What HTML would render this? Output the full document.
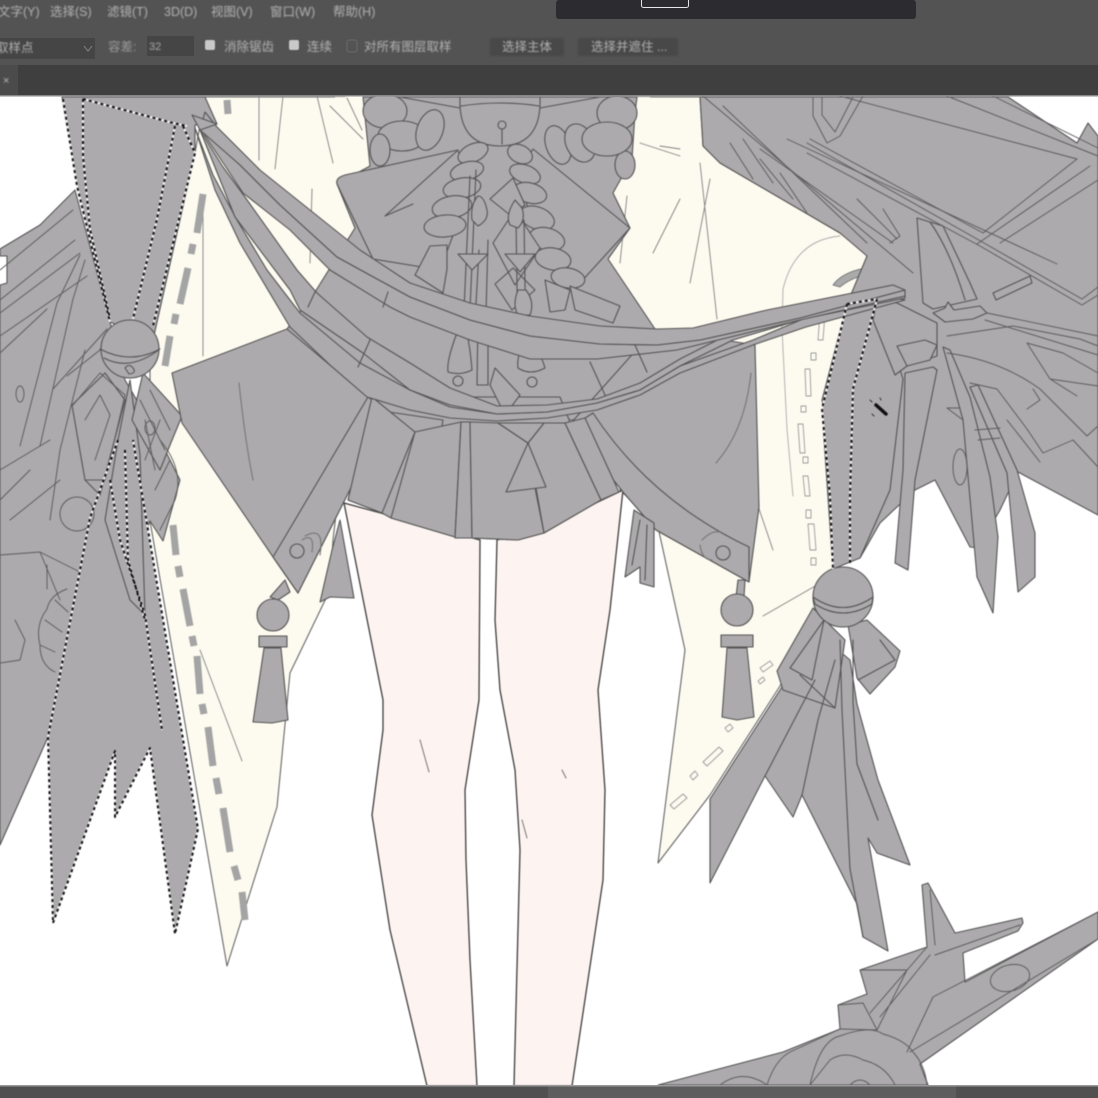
<!DOCTYPE html>
<html><head><meta charset="utf-8"><style>
html,body{margin:0;padding:0;background:#fff}
#w{position:relative;width:1098px;height:1098px;overflow:hidden;font-family:"Liberation Sans","Noto Sans CJK SC",sans-serif}
svg{position:absolute;left:0;top:0}
#art{filter:blur(.5px)}
.t{position:absolute;color:#b4b4b4;font-size:12.5px;white-space:nowrap;filter:blur(.7px);line-height:14px}
.ck{position:absolute;width:10px;height:10px;background:#c9c9c9;border-radius:2px;top:40px;filter:blur(.5px)}
.b{position:absolute;top:38px;height:18px;background:#484848;border-radius:2px;filter:blur(1px)}
</style></head><body><div id="w">
<svg width="1098" height="1098" viewBox="0 0 1098 1098" xmlns="http://www.w3.org/2000/svg">
<rect width="1098" height="1098" fill="#fff"/>
<g id="art" stroke-linejoin="round" stroke-linecap="round">
<!-- cream -->
<g fill="#fdfbf0" stroke="#666" stroke-width="1.100">
<path d="M205 97L345 97L350 240L340 480L333 540L330 590L290 673L277 807L227 966L150 521L150 340L195 153Z"/>
<path d="M610 97L700 97L703 146L720 163L840 233L893 273L847 304L822 409L833 569L780 686L710 795L658 863L685 650L658 527L620 490L600 300Z"/>
<path d="M335 97H650V340H335Z" stroke="none"/>
</g>
<g fill="none" stroke="#808080" stroke-width=".9">
<path d="M283 96L275 169M317 96L333 163M259 96L259 160M312 189L310 263M203 196L203 356M330 106L363 139M347 98L362 130M200 650L242 761M640 143L680 156M660 146L680 149M680 199L653 253M627 196L620 263M690 283L710 179M700 163L717 319M757 503L773 550M763 616L817 585"/>
<path d="M840 236Q795 240 783 289L782 329L787 429L793 496" stroke="#aaa"/>
</g>
<path d="M833 285Q845 268 883 266L885 272Q855 274 840 287Z" fill="#aaa" stroke="#666" stroke-width=".8"/>
<!-- dashes -->
<g fill="none" stroke="#a4a4a4" stroke-width="7" stroke-linecap="butt">
<path d="M227 100L228 114M203 194L197 233M193 244L191 254M188 268L180 304M176 314L174 324M170 336L165 366M173 525L176 555M178 566L180 577M183 589L190 626M192 636L194 646M197 656L200 694M202 704L204 714M208 727L213 766M216 778L219 794M223 808L230 852M234 866L238 880M242 892L245 920"/>
</g>
<g fill="#fdfbf0" stroke="#999" stroke-width=".9">
<path d="M820 313h5l-2 27h-5zM811 353h5v7h-5zM805 369h5l1 27h-5zM801 406h5v6h-5zM798 424h5l2 29h-5zM803 457h5v6h-5zM803 476h5l2 20h-5zM806 510h5v8h-5zM808 524h6l2 26h-6zM811 558h5v7h-5z"/>
<path d="M760 668l10-7 3 4-10 7zM758 681l5-4 2 3-5 4zM725 728l5-4 3 4-5 4zM703 762l16-15 4 4-16 15zM690 776l5-5 3 4-5 5zM670 805l13-11 4 4-13 11z"/>
</g>
<!-- legs -->
<g fill="#fdf3f0" stroke="#3d3d3d" stroke-width="1.300">
<path d="M344 503L383 700L383 730L372 815L390 930L427 1086L477 1086L470 960L466 860L465 790L479 700L480 540Z"/>
<path d="M497 540L495 620L500 690L515 770L520 850L514 1086L572 1086L603 880L605 790L598 690L610 610L623 490L560 520Z"/>
</g>
<path d="M420 740L429 772M562 770L566 778M522 820L527 838" stroke="#777" fill="none"/>
<g fill="#acaaac" stroke="#555" stroke-width="1.100">
<!-- left gear -->
<path d="M0 249L40 225L75 190L110 322L125 380L160 440L180 480L163 541L150 521L135 560L90 560L48 737L0 845L0 285L7 283L7 256L0 256Z"/>
<!-- upper left ribbon -->
<path d="M62 97L205 97L217 124L195 125L195 153L153 340L110 322L77 186Z"/>
<!-- lower left ribbon -->
<path d="M118 440L90 518L48 737L53 923L115 751L115 817L150 748L175 934L198 829L133 440Z"/>
<path d="M130 380L140 455L145 615L130 600L105 520L118 440Z"/>
<!-- bows -->
<path d="M105 373L72 405L85 480L100 495L125 400Z"/>
<path d="M143 373L182 416L170 445L160 470L132 420Z"/>
<circle cx="130" cy="349" r="29"/>
<path d="M100 349Q130 365 160 349Q130 372 104 358" fill="none"/>
<path d="M125 368q4-5 8 0t-4 6z" fill="none"/>
<!-- upper body -->
<path d="M363 97H637L635 113L632 159L613 193L630 228L608 259L655 329L620 420H380L300 400L287 329L315 292L355 228L337 184L370 166Z"/>
<!-- skirt -->
<path d="M372 397L560 397L601 500L544 533L518 540L472 538L455 537L391 518L382 513L348 500Z"/>
<path d="M459 520H470V537H459Z" fill="#fdf3f0" stroke="none"/>
<path d="M172 373L287 329L368 397L389 412L298 593L273 557L182 423Z" />
<path d="M655 329L755 345L759 507L749 582L656 530L623 492L571 423Z"/>
<path d="M273 557L298 593L389 412L368 397Z"/>
<path d="M593 413Q650 500 749 547L749 582L656 530L623 492L571 427Z"/>
<path d="M389 412L443 420L439 443L415 432Z"/>
<path d="M372 397L415 432L382 513L348 500Z"/>
<path d="M415 432L391 518L455 537L461 422Z"/>
<path d="M461 422H470L472 538H455Z"/>
<path d="M470 422L472 538L518 540L544 533L536 493L528 443L498 423Z"/>
<path d="M528 443L544 423L565 423L601 500L544 533Z"/>
<path d="M565 423L601 500L619 492L585 418Z"/>
<path d="M498 423L528 443L544 423Z"/>
<path d="M528 443L546 487L506 492Z"/>
<path d="M340 520L332 550L320 602L330 597L354 598Z"/>
<path d="M634 510L625 577L640 567L640 583L654 587L654 523Z"/>
<path d="M640 520L632 565M647 525L645 580" fill="none"/>
<path d="M239 383Q245 440 253 480M716 463Q745 430 751 373" fill="none" stroke="#777"/>
<circle cx="297" cy="551" r="7"/><circle cx="723" cy="553" r="7"/>
<path d="M305 536Q325 525 320 555M302 540Q315 532 312 552M702 540Q712 530 720 532M700 545Q702 560 712 560" fill="none" stroke="#777"/>
<!-- left tassel -->
<path d="M285 580L290 592L278 600L270 597Z"/>
<ellipse cx="273" cy="615" rx="16" ry="16"/>
<path d="M259 636H287V647H259Z"/>
<path d="M264 648H281L288 720L272 723L253 722Z"/>
<!-- right tassel -->
<path d="M738 580H745L744 597H736Z"/>
<ellipse cx="737" cy="610" rx="16" ry="16"/>
<path d="M721 635H753V647H721Z"/>
<path d="M727 648H747L754 717L737 720L722 717Z"/>
<!-- top beads -->
<ellipse cx="385" cy="111" rx="22" ry="17"/><ellipse cx="402" cy="136" rx="24" ry="15"/><ellipse cx="430" cy="130" rx="13" ry="21" transform="rotate(20 430 130)"/><ellipse cx="380" cy="150" rx="10" ry="16"/>
<ellipse cx="625" cy="165" rx="10" ry="14"/><ellipse cx="617" cy="113" rx="20" ry="17"/><ellipse cx="558" cy="145" rx="12" ry="20" transform="rotate(-20 558 145)"/><ellipse cx="580" cy="143" rx="14" ry="20" transform="rotate(-25 580 143)"/><ellipse cx="607" cy="139" rx="25" ry="17"/>
<path d="M400 97L460 108M540 108L600 97" fill="none"/>
<!-- bow -->
<path d="M337 184Q335 178 345 175L458 150L470 190L440 270L373 259Z"/>
<path d="M533 149L630 228L580 283L530 220L520 170Z"/>
<path d="M457 151L385 216L413 204" fill="none"/>
<path d="M460 97L540 97Q542 146 500 146Q458 146 460 97Z"/>
<path d="M461 106Q500 100 539 106" fill="none"/>
<path d="M502 128V144" fill="none"/><circle cx="502" cy="125" r="4"/>
<!-- braid -->
<ellipse cx="473" cy="153" rx="16" ry="9" transform="rotate(-25 473 153)"/>
<ellipse cx="467" cy="171" rx="17" ry="9" transform="rotate(-15 467 171)"/>
<ellipse cx="462" cy="188" rx="19" ry="10" transform="rotate(-10 462 188)"/>
<ellipse cx="452" cy="207" rx="20" ry="11" transform="rotate(-10 452 207)"/>
<ellipse cx="445" cy="226" rx="21" ry="11" transform="rotate(-5 445 226)"/>
<path d="M430 246L447 245L447 269L443 293L415 275Z"/>
<ellipse cx="520" cy="154" rx="13" ry="9" transform="rotate(25 520 154)"/>
<ellipse cx="525" cy="174" rx="16" ry="9" transform="rotate(20 525 174)"/>
<ellipse cx="530" cy="193" rx="17" ry="10" transform="rotate(15 530 193)"/>
<ellipse cx="537" cy="218" rx="18" ry="11" transform="rotate(20 537 218)"/>
<ellipse cx="547" cy="239" rx="18" ry="11" transform="rotate(15 547 239)"/>
<ellipse cx="553" cy="259" rx="18" ry="11" transform="rotate(10 553 259)"/>
<ellipse cx="568" cy="278" rx="17" ry="10" transform="rotate(10 568 278)"/>
<path d="M570 286L620 306L613 323L575 310Z"/>
<path d="M490 199L513 178L525 205L510 215ZM493 243L515 210L540 248L515 285ZM495 284L513 268L535 290L512 310ZM545 280L570 290L565 310L550 312Z"/>
<path d="M470 176L464 310M476 170L470 310M479 250L474 340M488 240L485 350" fill="none"/>
<path d="M516 220L518 350M524 220L526 350" fill="none"/>
<path d="M478 196Q470 205 472 220L478 226Q489 220 487 210Q484 196 478 196Z"/>
<path d="M515 200Q505 215 510 225L518 228Q526 220 522 208Z"/>
<path d="M458 254H488L472 270ZM505 254H535L520 272Z"/>
<path d="M518 290Q512 305 518 315H530Q535 302 526 290Z"/>
<path d="M478 316L488 316L488 385L477 385Z"/>
<path d="M460 325Q446 360 448 372Q460 376 472 370Q470 345 466 330Z"/>
<path d="M527 338Q516 355 518 368Q530 376 545 368Q540 350 527 338Z"/>
<circle cx="458" cy="381" r="5"/><circle cx="532" cy="382" r="5"/>
<path d="M495 368L520 395L505 415L490 385Z"/>
</g>
<g fill="#acaaac" stroke="#555" stroke-width="1.100">
<!-- right gear big -->
<path d="M700 97L1008 97L1077 143L1088 123L1098 136L1098 515L1018 472L1000 510L978 548L970 547L935 480L915 490L880 523L860 558L850 560L822 400L847 304L867 256L840 233L720 163L703 146Z"/>
<!-- strips -->
<path d="M933 367L905 373L903 470L895 563L908 570L915 480L937 370Z"/>
<path d="M943 347L963 420L977 577L993 613L998 537L990 477L970 397L950 350Z"/>
<path d="M970 387L1007 473L1018 592L1035 577L1035 533L1017 470L978 385Z"/>
<!-- selected piece -->
<path d="M847 304L877 299L903 379L890 490L860 558L833 569L822 409Z"/>
<path d="M877 299L897 303L937 323L937 356L907 366L895 375L873 320Z"/>
<path d="M897 346L907 366L930 360L937 345L925 340Z"/>
<!-- spade -->
<path d="M917 218L943 226L970 283L977 299L933 309L923 303Z"/>
<path d="M930 222Q950 250 965 300" fill="none"/>
<path d="M993 293L1030 276L1032 283L996 300Z"/>
<path d="M933 313L945 308L948 302L954 310L980 306L987 313L973 319L945 322Z"/>
<!-- right ribbon -->
<path d="M780 690L710 799L710 883L765 776L793 817L802 795L857 904L863 937L888 951L868 838L877 853L910 865L878 780L857 704L850 660L815 630Z"/>
<path d="M813 608L777 671L783 690L835 708L845 640Z"/>
<path d="M867 620L900 651L895 667L870 694L857 678L848 625Z"/>
<path d="M790 668L824 620L812 680ZM800 675L835 708" fill="none"/>
<path d="M880 640L895 660L858 680" fill="none"/>
<circle cx="843" cy="597" r="30"/>
<path d="M813 597Q843 618 873 597L872 604Q843 622 815 604Z" fill="none"/>
<path d="M840 640L842 710L850 869L863 937M853 640L853 702L857 764L878 820M835 660L818 720L802 795M815 680L765 776" fill="none"/>
<!-- plane -->
<path d="M658 1085L783 1052L840 1029L838 1005L867 994L860 970L927 947L922 885L928 883L955 933L1022 918L1023 923L1018 931L963 953L965 982L1098 912L1098 939L920 1064L928 1085Z"/>
</g>
<g fill="none" stroke="#5c5c5c" stroke-width=".95">
<!-- plane details -->
<path d="M720 1085Q743 1068 767 1085M767 1085Q775 1060 790 1052L840 1029M810 1085Q820 1040 840 1036Q870 1025 883 1034Q905 1040 913 1052Q925 1065 927 1085M810 1085Q830 1060 830 1060Q845 1050 863 1060Q885 1065 895 1085M850 1085Q860 1075 870 1085"/>
<path d="M838 1005L863 1003L877 1030L840 1029M860 970L907 970L877 1030M870 1013L927 947M880 1017L930 955M907 1052L933 997L1098 912M910 1052L1098 939M935 955L1020 925M930 890L935 945"/>
<ellipse cx="1010" cy="978" rx="20" ry="13" transform="rotate(-15 1010 978)"/>
<!-- upper right lines -->
<path d="M813 97L813 116L827 143L840 136L863 96M822 97L822 115L835 132L853 97"/>
<path d="M840 96L1077 159L983 233L810 139M807 143L977 239L1082 299L1098 287M807 153L980 246L1082 305L1098 295M947 96L1098 156M993 96L1098 148M977 244L1090 166M1000 243L1098 180"/>
<path d="M703 96L913 273M723 106L867 243M760 149L893 243M787 139L1057 264M730 143L753 179M743 139L773 183M760 159L793 199M780 173L807 213M857 199L897 239M883 209L900 236L890 243"/>
<path d="M947 336L1013 326L1080 339L1098 346M987 313L1098 336M985 320L1098 355M1027 343L1050 379L1077 396M1027 343L1063 353L1098 373M1050 379L1098 386M947 353Q1000 360 1040 389L1087 436L1098 426M1033 389L1040 400L1027 409M970 383L997 389L1027 429L1043 453L1073 440L1098 467"/>
<path d="M1007 420L1040 462M963 420L947 408M947 408H960"/>
<ellipse cx="960" cy="467" rx="7" ry="18"/>
<path d="M975 430L1000 428M978 440L1000 438"/>
<!-- left gear details -->
<path d="M0 313L80 253M0 336L87 276M0 353L47 309M20 446L57 303L80 255M40 446L73 299L85 260M53 389L107 329M67 376L100 350M0 270L73 210M0 300L75 240"/>
<path d="M85 350L60 450L50 520M73 405L100 373L125 395L105 480L85 480M85 420L100 395L110 415L95 460M140 400L165 450M150 390L170 430M145 420L155 470M160 420L145 460"/>
<ellipse cx="20" cy="394" rx="4" ry="8"/><ellipse cx="150" cy="428" rx="5" ry="7"/>
<circle cx="77" cy="514" r="17"/>
<path d="M0 555L40 552L80 572M40 552L60 600M47 565L47 589M0 470L50 440M10 520L60 480M0 500L30 470M0 663L20 660L25 640L15 620"/>
<path d="M67 589Q50 595 47 609Q35 625 40 645Q40 665 55 672M55 600L68 612M45 620L62 632M40 645L55 652"/>
<path d="M160 440Q185 470 175 500L160 530M170 460L155 490"/>
</g>
<!-- sash ribbons -->
<g fill="#acaaac" stroke="#555" stroke-width="1.100">
<path d="M195 128L213 175L237 220L267 270L300 313L360 363L410 390L450 407L497 414L547 412L597 403L640 390L680 366L753 340L803 319L887 297L905 300L806 327L753 345L680 373L640 395L597 410L547 418L497 421L450 418L410 410L367 397L330 365L290 327L240 243L215 190Z"/>
<path d="M200 130L223 167L245 197L297 270L317 293L367 337L410 363L450 388L497 406L547 405L597 399L640 383L680 359L733 332L800 312L905 292L905 298L803 319L733 340L680 366L640 390L597 403L547 412L497 414L450 405L410 390L363 353L300 310L290 290L235 217Z"/>
<path d="M200 128L240 165L280 205L337 257L410 297L470 320L530 336L600 344L657 345L700 340L800 318L905 290L905 296L800 320L677 350L597 359L530 359L470 340L410 317L390 307L330 270L290 230L243 193Z"/>
<path d="M205 112L217 127L260 170L310 210L360 250L410 283L470 303L530 316L600 326L657 329L693 328L767 310L893 285L905 290L800 318L700 340L657 345L600 344L530 336L470 320L410 297L337 257L280 205L240 165L200 130Z"/>
<path d="M192 115L217 124L200 130Z"/>
<path d="M388 292L383 307M315 292L308 307M370 340L358 367M635 345L647 372M590 362L605 395" fill="none"/>
</g>
<!-- marching ants -->
<g fill="none" stroke-linecap="butt" stroke-width="2">
<path d="M63 99L77 186L110 322M83 99L83 156L90 229L110 319M83 99L173 123L187 126M175 126L157 219L133 319M183 126L195 153L153 326M118 440L90 518L48 737L53 923L115 751L115 817L150 748L175 934L198 829L133 440M110 480L120 540L145 615L162 730M125 450L128 560L145 620M847 304L822 409L830 496L833 569M847 304L877 299M877 299L853 389L850 496L850 564" stroke="#f2f2f2"/>
<path d="M63 99L77 186L110 322M83 99L83 156L90 229L110 319M83 99L173 123L187 126M175 126L157 219L133 319M183 126L195 153L153 326M118 440L90 518L48 737L53 923L115 751L115 817L150 748L175 934L198 829L133 440M110 480L120 540L145 615L162 730M125 450L128 560L145 620M847 304L822 409L830 496L833 569M847 304L877 299M877 299L853 389L850 496L850 564" stroke="#111" stroke-dasharray="3 3"/>
</g>
<path d="M876 405l10 9" stroke="#111" stroke-width="3.500"/>
<path d="M870 400l2 2M880 398l1 2M872 414l2 2" stroke="#333" stroke-width="1"/>
</g>
<!-- UI -->
<rect x="0" y="0" width="1098" height="65" fill="#535353"/>
<rect x="0" y="65" width="1098" height="31" fill="#3f3f3f"/>
<rect x="0" y="65" width="18" height="31" fill="#4b4b4b"/>
<rect x="556" y="0" width="360" height="19" rx="3" fill="#2b2b30"/>
<rect x="641.500" y="-3" width="47" height="10.500" rx="2" fill="none" stroke="#e6e6e6"/>
<rect x="0" y="38" width="95" height="21" fill="#454545"/>
<rect x="147" y="36" width="47" height="20" fill="#454545"/>
<path d="M84 46l4 5 4-5" fill="none" stroke="#888"/>
<rect x="347" y="40" width="10" height="12" rx="2" fill="none" stroke="#6a6a6a"/>
<rect x="0" y="95" width="1098" height="1.500" fill="#888"/>
<rect x="0" y="1086" width="1098" height="12" fill="#505050"/>
<rect x="548" y="1086" width="408" height="12" fill="#5d5d5d"/>
<rect x="0" y="1085" width="1098" height="1.500" fill="#999"/>
</svg>
<div class="t" style="left:-2px;top:5px">文字(Y)</div>
<div class="t" style="left:50px;top:5px">选择(S)</div>
<div class="t" style="left:107px;top:5px">滤镜(T)</div>
<div class="t" style="left:164px;top:5px">3D(D)</div>
<div class="t" style="left:211px;top:5px">视图(V)</div>
<div class="t" style="left:270px;top:5px">窗口(W)</div>
<div class="t" style="left:333px;top:5px">帮助(H)</div>
<div class="t" style="left:-4px;top:41px">取样点</div>
<div class="t" style="left:108px;top:40px;color:#9a9a9a">容差:</div>
<div class="t" style="left:149px;top:40px;font-size:11px;color:#aaa">32</div>
<div class="ck" style="left:205px"></div>
<div class="t" style="left:224px;top:40px">消除锯齿</div>
<div class="ck" style="left:289px"></div>
<div class="t" style="left:307px;top:40px">连续</div>
<div class="t" style="left:364px;top:40px">对所有图层取样</div>
<div class="b" style="left:490px;width:74px"></div>
<div class="t" style="left:502px;top:40px">选择主体</div>
<div class="b" style="left:578px;width:100px"></div>
<div class="t" style="left:591px;top:40px">选择并遮住 ...</div>
<div class="t" style="left:3px;top:74px;color:#bbb;font-size:11px">×</div>
</div></body></html>
